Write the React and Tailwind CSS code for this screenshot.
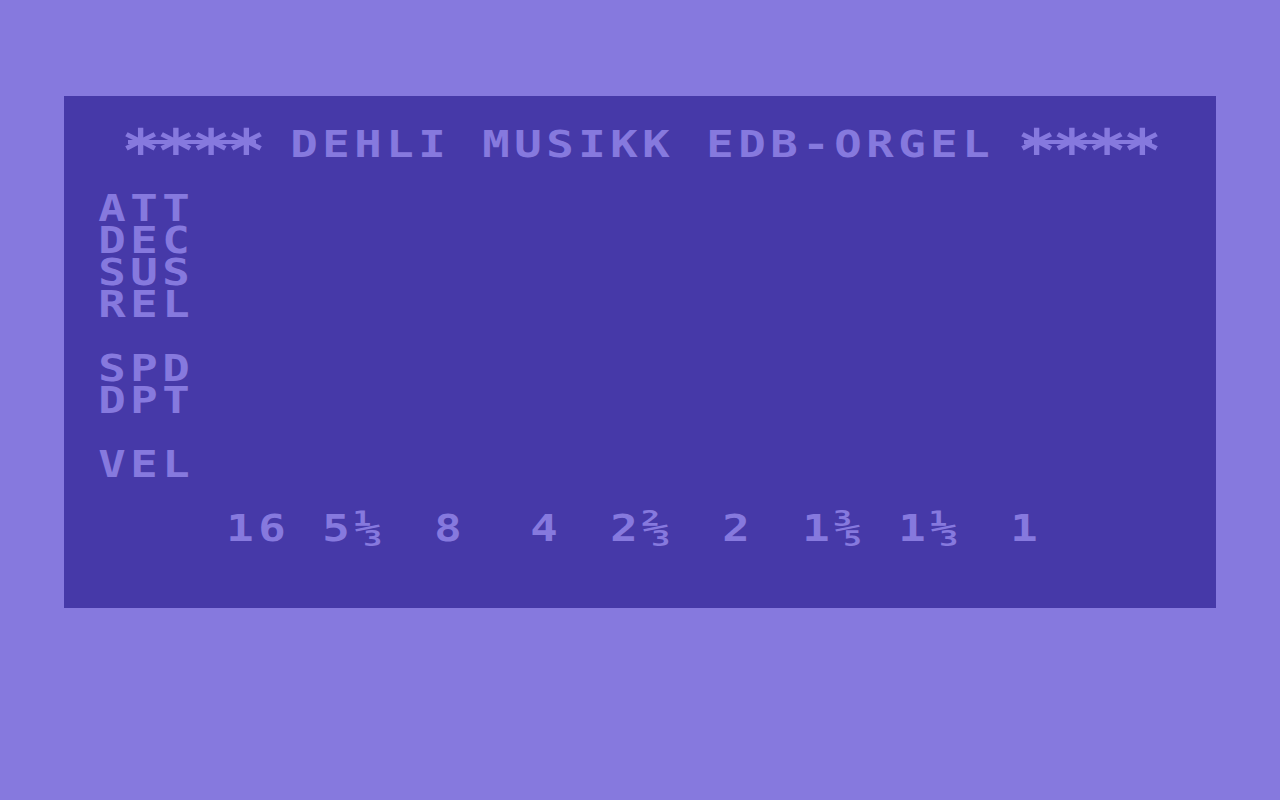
const FG = "text-[#8679de]";

const lines = [
  "",
  "  **** DEHLI MUSIKK EDB-ORGEL ****",
  "",
  " ATT",
  " DEC",
  " SUS",
  " REL",
  "",
  " SPD",
  " DPT",
  "",
  " VEL",
];

const footages = ["16", "5⅓", "8", "4", "2⅔", "2", "1⅗", "1⅓", "1"];

function Stars({ text }) {
  // c64 asterisks run into each other, so keep the whole group as one text run
  return (
    <span
      className="relative flex h-8 shrink-0 justify-center"
      style={{ width: text.length * 32 }}
    >
      <span className="absolute inset-x-0 top-[12px] h-1 bg-current" />
      <span className="relative whitespace-pre text-[58px] leading-[58px] tracking-[-2.9px] -translate-y-[6px] scale-x-[1.1]">
        {text}
      </span>
    </span>
  );
}

function Glyph({ ch }) {
  return (
    <span className="flex h-8 w-8 shrink-0 justify-center scale-x-[1.2] whitespace-pre">
      {ch}
    </span>
  );
}

function Line({ text }) {
  const parts = text.match(/\*+|[^*]/g) || [];
  return (
    <div className="flex h-8">
      {parts.map((p, i) =>
        p[0] === "*" ? <Stars key={i} text={p} /> : <Glyph key={i} ch={p} />
      )}
    </div>
  );
}

export default function App() {
  return (
    <div className="h-[800px] w-[1280px] bg-[#8679de] pl-16 pt-24">
      <div
        className={`h-[512px] w-[1152px] bg-[#4639a8] text-[38px] leading-8 font-bold ${FG}`}
        style={{ fontFamily: '"DejaVu Sans Mono", "Liberation Mono", monospace' }}
      >
        {lines.map((t, i) => (
          <Line key={i} text={t} />
        ))}
        <div className="h-8" />
        <div className="flex h-8 gap-8 pl-40">
          {footages.map((f, n) => (
            <div key={n} className="flex w-16 justify-center">
              {Array.from(f).map((ch, i) => (
                <Glyph key={i} ch={ch} />
              ))}
            </div>
          ))}
        </div>
      </div>
    </div>
  );
}
